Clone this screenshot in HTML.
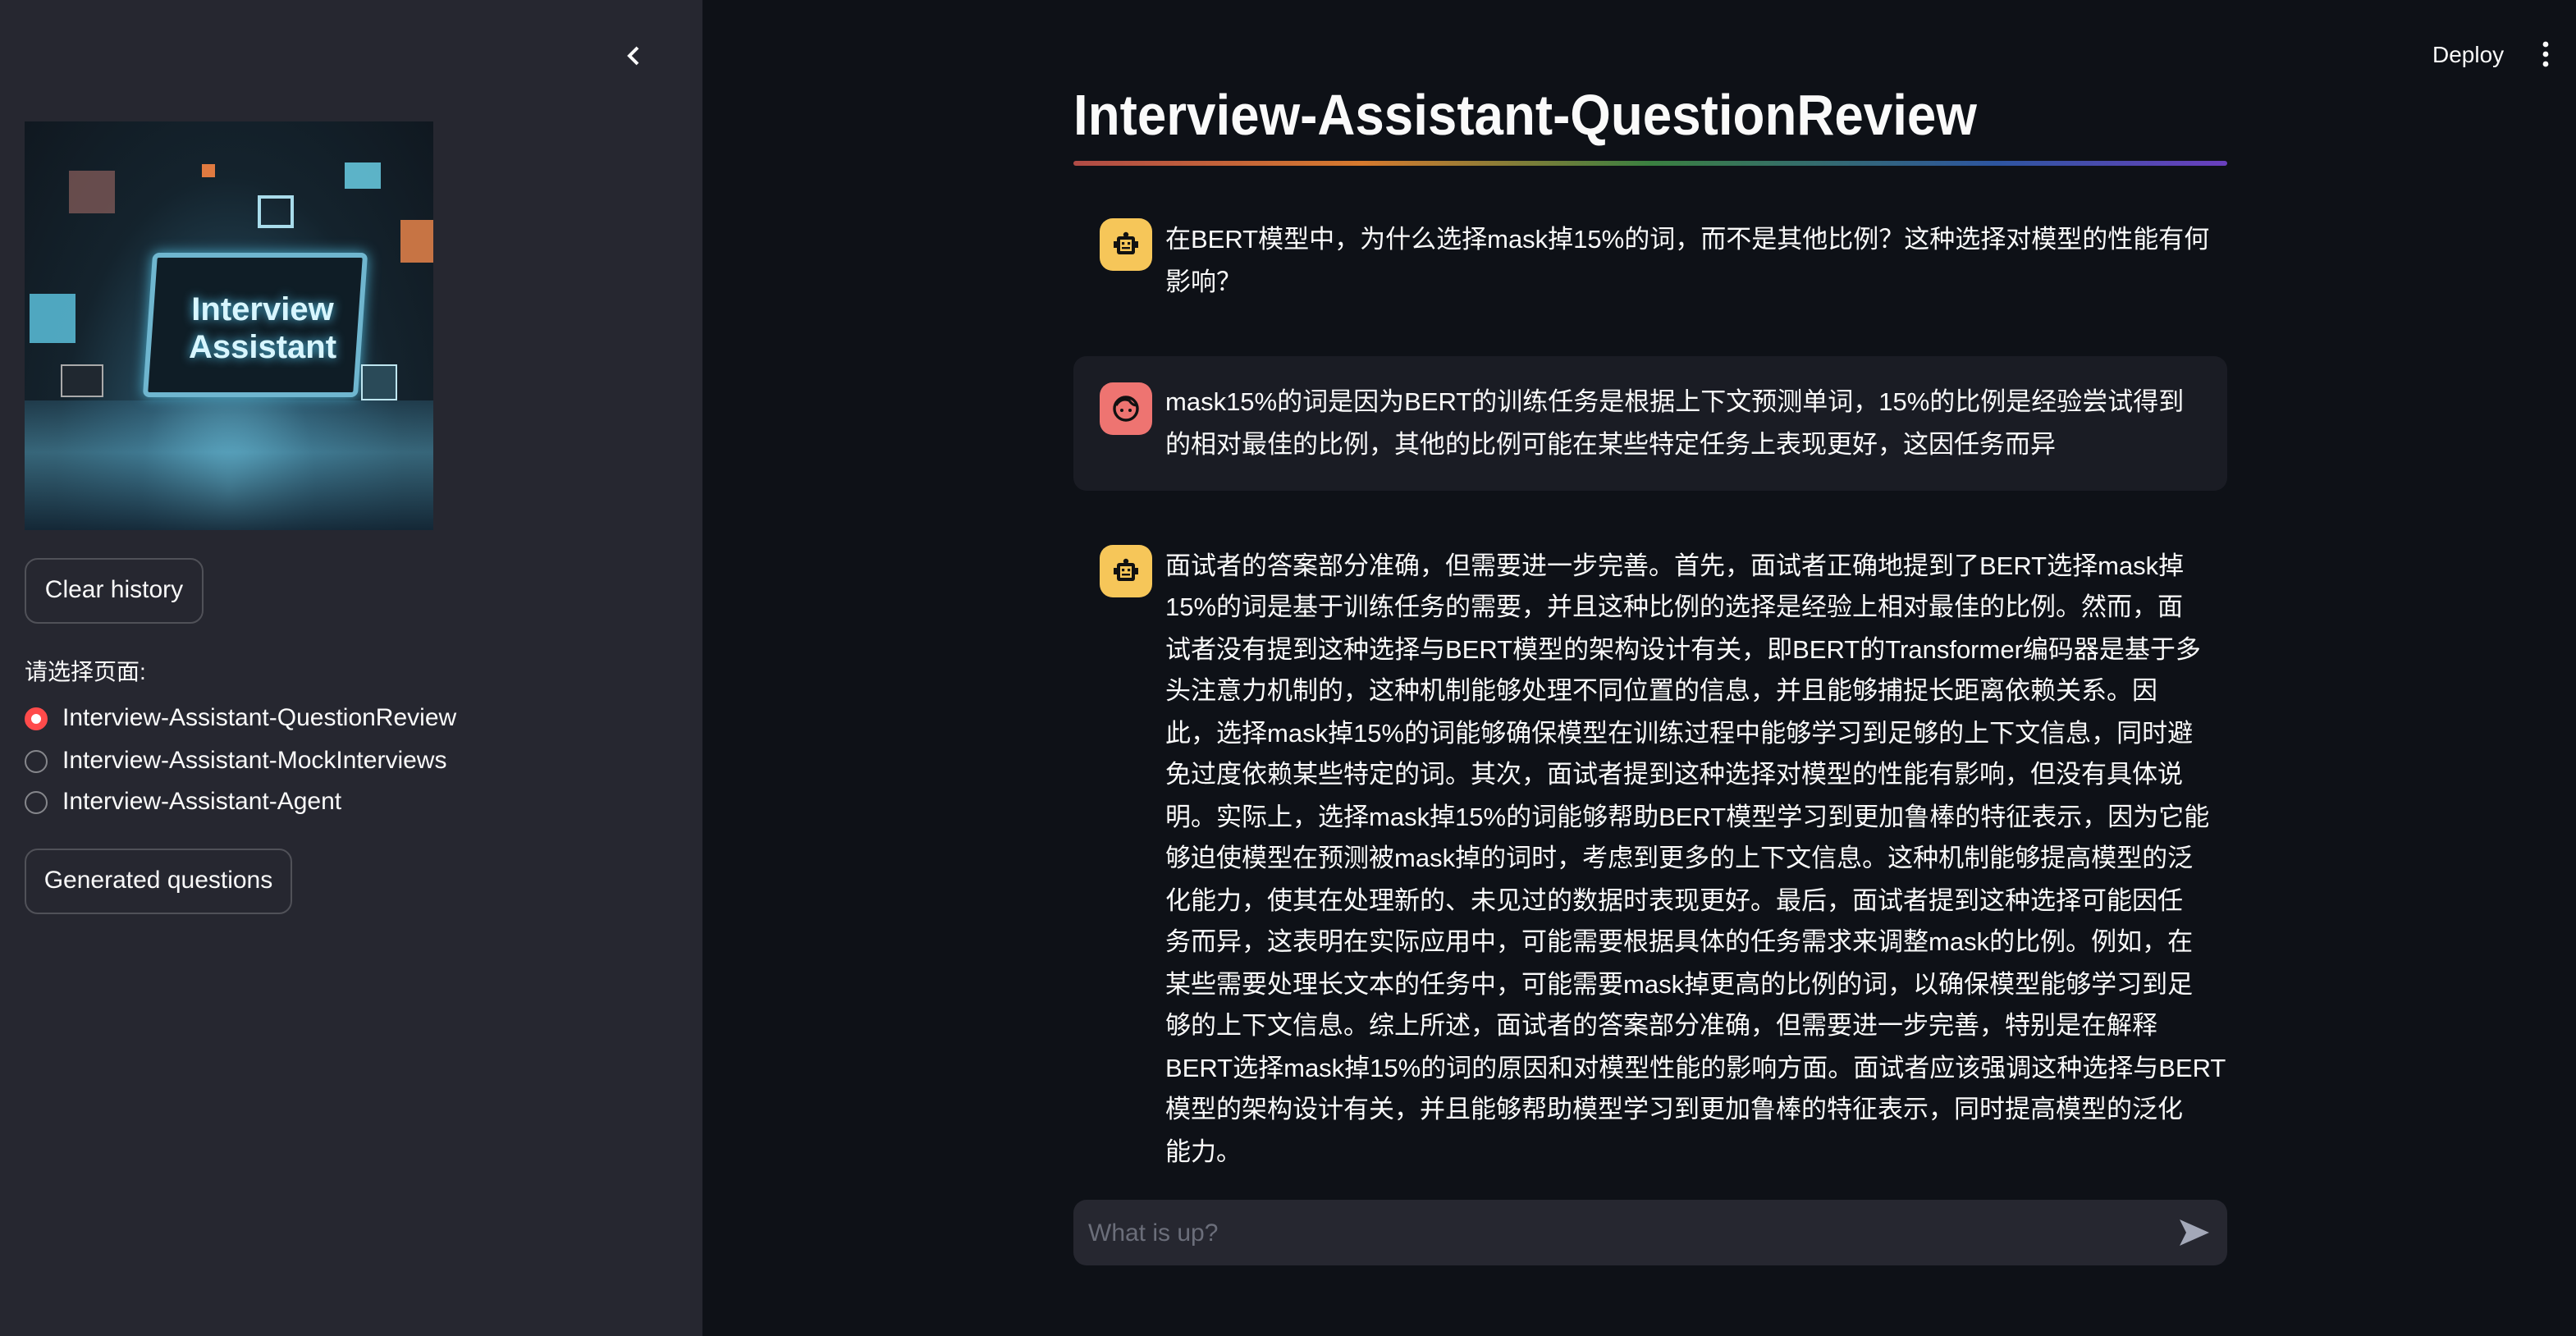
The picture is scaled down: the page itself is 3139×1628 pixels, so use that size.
<!DOCTYPE html>
<html><head><meta charset="utf-8">
<style>
html,body{margin:0;padding:0;background:#0e1117;overflow:hidden;}
body{width:3139px;height:1628px;}
#w{position:absolute;left:0;top:0;width:1569.5px;height:814px;transform:scale(2);transform-origin:0 0;font-family:"Liberation Sans","Noto Sans CJK SC",sans-serif;color:#fafafa;}
.a{position:absolute;}
#sb{left:0;top:0;width:428px;height:814px;background:#262730;}
.btn{position:absolute;border:1px solid rgba(250,250,250,0.2);border-radius:8px;font-size:15px;line-height:38px;text-align:center;box-sizing:border-box;height:40px;color:#fafafa;}
.rad{position:absolute;left:15px;font-size:15px;line-height:20px;}
.rad i{position:absolute;left:0;top:3px;width:14px;height:14px;border-radius:50%;border:1px solid rgba(250,250,250,0.45);box-sizing:border-box;}
.rad span{position:absolute;left:23px;white-space:nowrap;}
.av{position:absolute;width:32px;height:32px;border-radius:8px;}
.txt{position:absolute;left:710px;font-size:15.5px;line-height:25.5px;white-space:nowrap;}
</style></head><body><div id="w">
<div id="sb" class="a">
 <svg class="a" style="left:379px;top:27px" width="14" height="14" viewBox="0 0 14 14"><path d="M9.5 2 L4.5 7 L9.5 12" stroke="#fafafa" stroke-width="2" fill="none"/></svg>
 <div class="a" style="left:15px;top:74px;width:249px;height:249px;overflow:hidden;background:radial-gradient(ellipse at 50% 90%,#5fa8c0 0%,#25485a 30%,#14232d 60%,#101820 100%);">
  <div class="a" style="left:0;top:170px;width:249px;height:79px;background:linear-gradient(180deg,rgba(60,120,150,.3),rgba(90,170,200,.5) 40%,rgba(20,40,55,.9));"></div>
  <div class="a" style="left:75px;top:80px;width:125px;height:82px;border:3px solid #6fb6cf;border-radius:4px;transform:skewX(-4deg);background:#0f1d26;box-shadow:0 0 8px #4aa9c8;"></div>
  <div class="a" style="left:90px;top:104px;font-size:20px;line-height:23px;font-weight:bold;color:#d8f6ff;text-shadow:0 0 6px #56c8ef;text-align:center;width:110px;">Interview<br>Assistant</div>
  <div class="a" style="left:3px;top:105px;width:28px;height:30px;background:#5fc9e6;opacity:.8"></div>
  <div class="a" style="left:195px;top:25px;width:22px;height:16px;background:#6fd8f0;opacity:.8"></div>
  <div class="a" style="left:229px;top:60px;width:20px;height:26px;background:#e8844a;opacity:.85"></div>
  <div class="a" style="left:27px;top:30px;width:28px;height:26px;background:#a06a66;opacity:.6"></div>
  <div class="a" style="left:108px;top:26px;width:8px;height:8px;background:#e07a40"></div>
  <div class="a" style="left:142px;top:45px;width:18px;height:16px;border:2px solid #a9dceb"></div>
  <div class="a" style="left:22px;top:148px;width:24px;height:18px;background:#202830;border:1px solid #aaa"></div>
  <div class="a" style="left:205px;top:148px;width:20px;height:20px;border:1px solid #bfe6f0;background:#2a4a58"></div>
 </div>
 <div class="btn" style="left:15px;top:340px;width:109px;">Clear history</div>
 <div class="a" style="left:15px;top:399px;font-size:14px;line-height:20px;">请选择页面:</div>
 <div class="rad" style="top:428px"><i style="border:4.5px solid #ff4b4b;background:#fff"></i><span>Interview-Assistant-QuestionReview</span></div>
 <div class="rad" style="top:454px"><i></i><span>Interview-Assistant-MockInterviews</span></div>
 <div class="rad" style="top:479px"><i></i><span>Interview-Assistant-Agent</span></div>
 <div class="btn" style="left:15px;top:517px;width:163px;">Generated questions</div>
</div>
<div class="a" style="left:1482px;top:23px;font-size:14px;line-height:20px;">Deploy</div>
<svg class="a" style="left:1546px;top:24px" width="10" height="18"><circle cx="5" cy="3" r="1.7" fill="#fafafa"/><circle cx="5" cy="9" r="1.7" fill="#fafafa"/><circle cx="5" cy="15" r="1.7" fill="#fafafa"/></svg>

<div class="a" style="left:654px;top:48px;font-size:35px;line-height:46px;font-weight:bold;white-space:nowrap;transform:scaleX(.91);transform-origin:0 0;">Interview-Assistant-QuestionReview</div>
<div class="a" style="left:654px;top:98px;width:703px;height:3px;border-radius:2px;background:linear-gradient(90deg,#b04b46,#d67a2e 25%,#3a8040 50%,#2d55a0 80%,#6a3fbe);"></div>

<div class="av" style="left:670px;top:133px;background:#f6c659;">
 <svg width="32" height="32" viewBox="0 0 32 32"><circle cx="16" cy="10" r="1.6" fill="#111"/><rect x="10.5" y="11" width="11" height="11" rx="1.5" fill="#111"/><rect x="8.5" y="14" width="2" height="4" fill="#111"/><rect x="21.5" y="14" width="2" height="4" fill="#111"/><rect x="12.5" y="13" width="7" height="7" fill="#f6c659"/><rect x="13.5" y="14.5" width="1.6" height="1.6" fill="#111"/><rect x="17" y="14.5" width="1.6" height="1.6" fill="#111"/><rect x="13.5" y="17.5" width="5" height="1.2" fill="#111"/></svg>
</div>
<div class="txt" style="top:134px">在BERT模型中，为什么选择mask掉15%的词，而不是其他比例？这种选择对模型的性能有何<br>影响？</div>

<div class="a" style="left:654px;top:217px;width:703px;height:82px;border-radius:8px;background:#1a1c24;"></div>
<div class="av" style="left:670px;top:233px;background:#ee7471;">
 <svg width="32" height="32" viewBox="0 0 32 32"><circle cx="16" cy="16" r="7" stroke="#111" stroke-width="1.7" fill="none"/><path d="M10 14 Q13 9 18 11 Q20 14 22.5 14" stroke="#111" stroke-width="1.6" fill="none"/><circle cx="13.5" cy="17" r="1" fill="#111"/><circle cx="18.5" cy="17" r="1" fill="#111"/></svg>
</div>
<div class="txt" style="top:233px">mask15%的词是因为BERT的训练任务是根据上下文预测单词，15%的比例是经验尝试得到<br>的相对最佳的比例，其他的比例可能在某些特定任务上表现更好，这因任务而异</div>

<div class="av" style="left:670px;top:332px;background:#f6c659;">
 <svg width="32" height="32" viewBox="0 0 32 32"><circle cx="16" cy="10" r="1.6" fill="#111"/><rect x="10.5" y="11" width="11" height="11" rx="1.5" fill="#111"/><rect x="8.5" y="14" width="2" height="4" fill="#111"/><rect x="21.5" y="14" width="2" height="4" fill="#111"/><rect x="12.5" y="13" width="7" height="7" fill="#f6c659"/><rect x="13.5" y="14.5" width="1.6" height="1.6" fill="#111"/><rect x="17" y="14.5" width="1.6" height="1.6" fill="#111"/><rect x="13.5" y="17.5" width="5" height="1.2" fill="#111"/></svg>
</div>
<div class="txt" style="top:332.5px">面试者的答案部分准确，但需要进一步完善。首先，面试者正确地提到了BERT选择mask掉<br>15%的词是基于训练任务的需要，并且这种比例的选择是经验上相对最佳的比例。然而，面<br>试者没有提到这种选择与BERT模型的架构设计有关，即BERT的Transformer编码器是基于多<br>头注意力机制的，这种机制能够处理不同位置的信息，并且能够捕捉长距离依赖关系。因<br>此，选择mask掉15%的词能够确保模型在训练过程中能够学习到足够的上下文信息，同时避<br>免过度依赖某些特定的词。其次，面试者提到这种选择对模型的性能有影响，但没有具体说<br>明。实际上，选择mask掉15%的词能够帮助BERT模型学习到更加鲁棒的特征表示，因为它能<br>够迫使模型在预测被mask掉的词时，考虑到更多的上下文信息。这种机制能够提高模型的泛<br>化能力，使其在处理新的、未见过的数据时表现更好。最后，面试者提到这种选择可能因任<br>务而异，这表明在实际应用中，可能需要根据具体的任务需求来调整mask的比例。例如，在<br>某些需要处理长文本的任务中，可能需要mask掉更高的比例的词，以确保模型能够学习到足<br>够的上下文信息。综上所述，面试者的答案部分准确，但需要进一步完善，特别是在解释<br>BERT选择mask掉15%的词的原因和对模型性能的影响方面。面试者应该强调这种选择与BERT<br>模型的架构设计有关，并且能够帮助模型学习到更加鲁棒的特征表示，同时提高模型的泛化<br>能力。</div>

<div class="a" style="left:654px;top:731px;width:703px;height:40px;border-radius:8px;background:#262730;"></div>
<div class="a" style="left:663px;top:742px;font-size:15px;line-height:20px;color:#6b6e7a;">What is up?</div>
<svg class="a" style="left:1327px;top:742px" width="20" height="18" viewBox="0 0 20 18"><path d="M1 1 L19 9 L1 17 L5 9 Z" fill="#a3a8b8"/></svg>
</div></body></html>
